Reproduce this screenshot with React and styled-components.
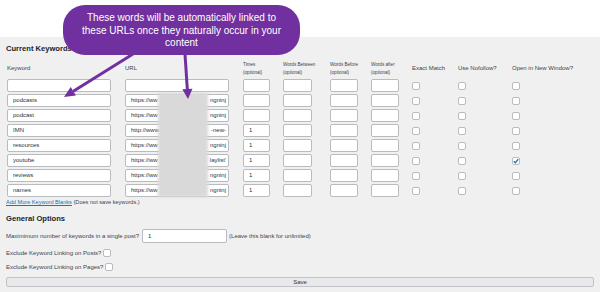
import React from "react";
import styled, { createGlobalStyle } from "styled-components";

const GlobalStyle = createGlobalStyle`
  html, body {
    margin: 0;
    padding: 0;
    background: #ffffff;
  }
  body {
    font-family: "Liberation Sans", Arial, sans-serif;
    color: #3c434a;
  }
`;

const PURPLE = "#7030a0";

const Page = styled.div`
  position: relative;
  width: 600px;
  height: 292px;
  overflow: hidden;
  background: #ffffff;
`;

const TopSpace = styled.div`
  height: 37px;
`;

const Panel = styled.div`
  height: 255px;
  background: #f0f0f1;
  padding: 6px 6px 0 6px;
  box-sizing: border-box;
`;

const Heading = styled.h3`
  margin: ${(p) => p.$top || 0}px 0 0 0;
  font-size: 7.6px;
  line-height: 11px;
  font-weight: bold;
  color: #1d2327;
`;

const Table = styled.div`
  margin-left: 1px;
  display: grid;
  grid-template-columns: 118px 118px 40px 47px 41px 41px 46px 54px 1fr;
  grid-template-rows: 23px;
  grid-auto-rows: 13px;
  row-gap: 2px;
`;

const HeadCell = styled.div`
  height: 23px;
  padding-top: 6px;
  box-sizing: border-box;
  display: flex;
  flex-direction: column;
  justify-content: center;
  font-size: ${(p) => (p.$small ? "4.6px" : "6px")};
  line-height: ${(p) => (p.$small ? "8px" : "9px")};
  color: #3c434a;
  white-space: nowrap;
`;

const Cell = styled.div`
  display: flex;
  align-items: center;
`;

const TextBox = styled.div`
  width: ${(p) => p.$w}px;
  height: 13px;
  box-sizing: border-box;
  background: #ffffff;
  border: 1px solid #b9bbbe;
  border-radius: 2px;
  padding: 0 2px 0 5px;
  font-size: 6px;
  line-height: 11px;
  color: #2c3338;
  display: flex;
  justify-content: ${(p) => (p.$split ? "space-between" : "flex-start")};
  overflow: hidden;
  white-space: nowrap;
`;

const Check = styled.div`
  width: 8px;
  height: 8px;
  box-sizing: border-box;
  background: #ffffff;
  border: 1px solid #b9bbbe;
  border-radius: 2px;
  margin-left: ${(p) => p.$ml || 0}px;
  display: flex;
  align-items: center;
  justify-content: center;
  flex-shrink: 0;
`;

const LinkRow = styled.div`
  margin-top: 1px;
  font-size: 5.6px;
  line-height: 9px;
  color: #3c434a;
`;

const BlueLink = styled.a`
  color: #2271b1;
  text-decoration: underline;
`;

const OptionRow = styled.div`
  display: flex;
  align-items: center;
  height: ${(p) => p.$h}px;
  margin-top: ${(p) => p.$top}px;
  font-size: 6px;
  color: #3c434a;
  white-space: nowrap;
`;

const NumberBox = styled.div`
  width: 85px;
  height: 14px;
  box-sizing: border-box;
  background: #ffffff;
  border: 1px solid #b9bbbe;
  border-radius: 2px;
  margin: 0 2px 0 3px;
  padding-left: 5px;
  font-size: 6px;
  line-height: 12px;
  color: #2c3338;
`;

const SaveButton = styled.button`
  display: block;
  width: 588px;
  height: 10px;
  margin-top: 5px;
  padding: 0;
  box-sizing: border-box;
  background: #e9e9eb;
  border: 1px solid #c3c4c7;
  border-radius: 2px;
  font-family: "Liberation Sans", Arial, sans-serif;
  font-size: 6px;
  line-height: 8px;
  color: #2c3338;
`;

const Blur = styled.div`
  position: absolute;
  left: 158px;
  top: 93px;
  width: 50px;
  height: 104px;
  background: #d9d9da;
  filter: blur(1.5px);
`;

const Callout = styled.div`
  position: absolute;
  left: 63px;
  top: 5px;
  width: 237px;
  height: 50px;
  box-sizing: border-box;
  padding-top: 7px;
  border-radius: 22px;
  background: ${PURPLE};
  color: #ffffff;
  font-size: 10px;
  line-height: 12.5px;
  text-align: center;
  white-space: nowrap;
`;

const Arrows = styled.svg`
  position: absolute;
  left: 0;
  top: 0;
  pointer-events: none;
`;

const rows = [
  { kw: "", url: null, times: "" },
  { kw: "podcasts", url: ["https://ww", "ngninj"], times: "" },
  { kw: "podcast", url: ["https://ww", "ngninj"], times: "" },
  { kw: "IMN", url: ["http://www", "-new-"], times: "1" },
  { kw: "resources", url: ["https://ww", "ngninj"], times: "1" },
  { kw: "youtube", url: ["https://ww", "laylist'"], times: "1", win: true },
  { kw: "reviews", url: ["https://ww", "ngninj"], times: "1" },
  { kw: "names", url: ["https://ww", "ngninj"], times: "1" },
];

const Tick = () => (
  <svg width="6" height="6" viewBox="0 0 6 6">
    <path d="M0.8 3.2 L2.4 4.7 L5.3 1.2" fill="none" stroke="#2271b1" strokeWidth="1.3" />
  </svg>
);

export default function App() {
  return (
    <Page>
      <GlobalStyle />
      <TopSpace />
      <Panel>
        <Heading>Current Keywords</Heading>
        <Table>
          <HeadCell>Keyword</HeadCell>
          <HeadCell>URL</HeadCell>
          <HeadCell $small>
            <span>Times</span>
            <span>(optional)</span>
          </HeadCell>
          <HeadCell $small>
            <span>Words Between</span>
            <span>(optional)</span>
          </HeadCell>
          <HeadCell $small>
            <span>Words Before</span>
            <span>(optional)</span>
          </HeadCell>
          <HeadCell $small>
            <span>Words after</span>
            <span>(optional)</span>
          </HeadCell>
          <HeadCell>Exact Match</HeadCell>
          <HeadCell>Use Nofollow?</HeadCell>
          <HeadCell>Open in New Window?</HeadCell>
          {rows.map((r, i) => (
            <React.Fragment key={i}>
              <Cell>
                <TextBox $w={104}>{r.kw}</TextBox>
              </Cell>
              <Cell>
                <TextBox $w={104} $split>
                  {r.url && (
                    <>
                      <span>{r.url[0]}</span>
                      <span>{r.url[1]}</span>
                    </>
                  )}
                </TextBox>
              </Cell>
              <Cell>
                <TextBox $w={27}>{r.times}</TextBox>
              </Cell>
              <Cell>
                <TextBox $w={29} />
              </Cell>
              <Cell>
                <TextBox $w={28} />
              </Cell>
              <Cell>
                <TextBox $w={28} />
              </Cell>
              <Cell>
                <Check />
              </Cell>
              <Cell>
                <Check />
              </Cell>
              <Cell>
                <Check>{r.win && <Tick />}</Check>
              </Cell>
            </React.Fragment>
          ))}
        </Table>
        <LinkRow>
          <BlueLink href="#">Add More Keyword Blanks</BlueLink> (Does not save keywords.)
        </LinkRow>
        <Heading $top={5.5}>General Options</Heading>
        <OptionRow $h={14} $top={5.5}>
          Maximimum number of keywords in a single post?
          <NumberBox>1</NumberBox>
          (Leave this blank for unlimited)
        </OptionRow>
        <OptionRow $h={10} $top={5}>
          Exclude Keyword Linking on Posts?
          <Check $ml={2} />
        </OptionRow>
        <OptionRow $h={10} $top={4}>
          Exclude Keyword Linking on Pages?
          <Check $ml={2} />
        </OptionRow>
        <SaveButton>Save</SaveButton>
      </Panel>
      <Blur />
      <Callout>
        These words will be automatically linked to
        <br />
        these URLs once they naturally occur in your
        <br />
        content
      </Callout>
      <Arrows width="600" height="292" viewBox="0 0 600 292">
        <line x1="133" y1="54" x2="73.3" y2="91.2" stroke={PURPLE} strokeWidth="3" />
        <polygon points="64,97 75.9,95.4 70.7,87" fill={PURPLE} />
        <line x1="185" y1="54" x2="187.3" y2="89" stroke={PURPLE} strokeWidth="3" />
        <polygon points="188,99 192.5,88.7 182.3,89.3" fill={PURPLE} />
      </Arrows>
    </Page>
  );
}
